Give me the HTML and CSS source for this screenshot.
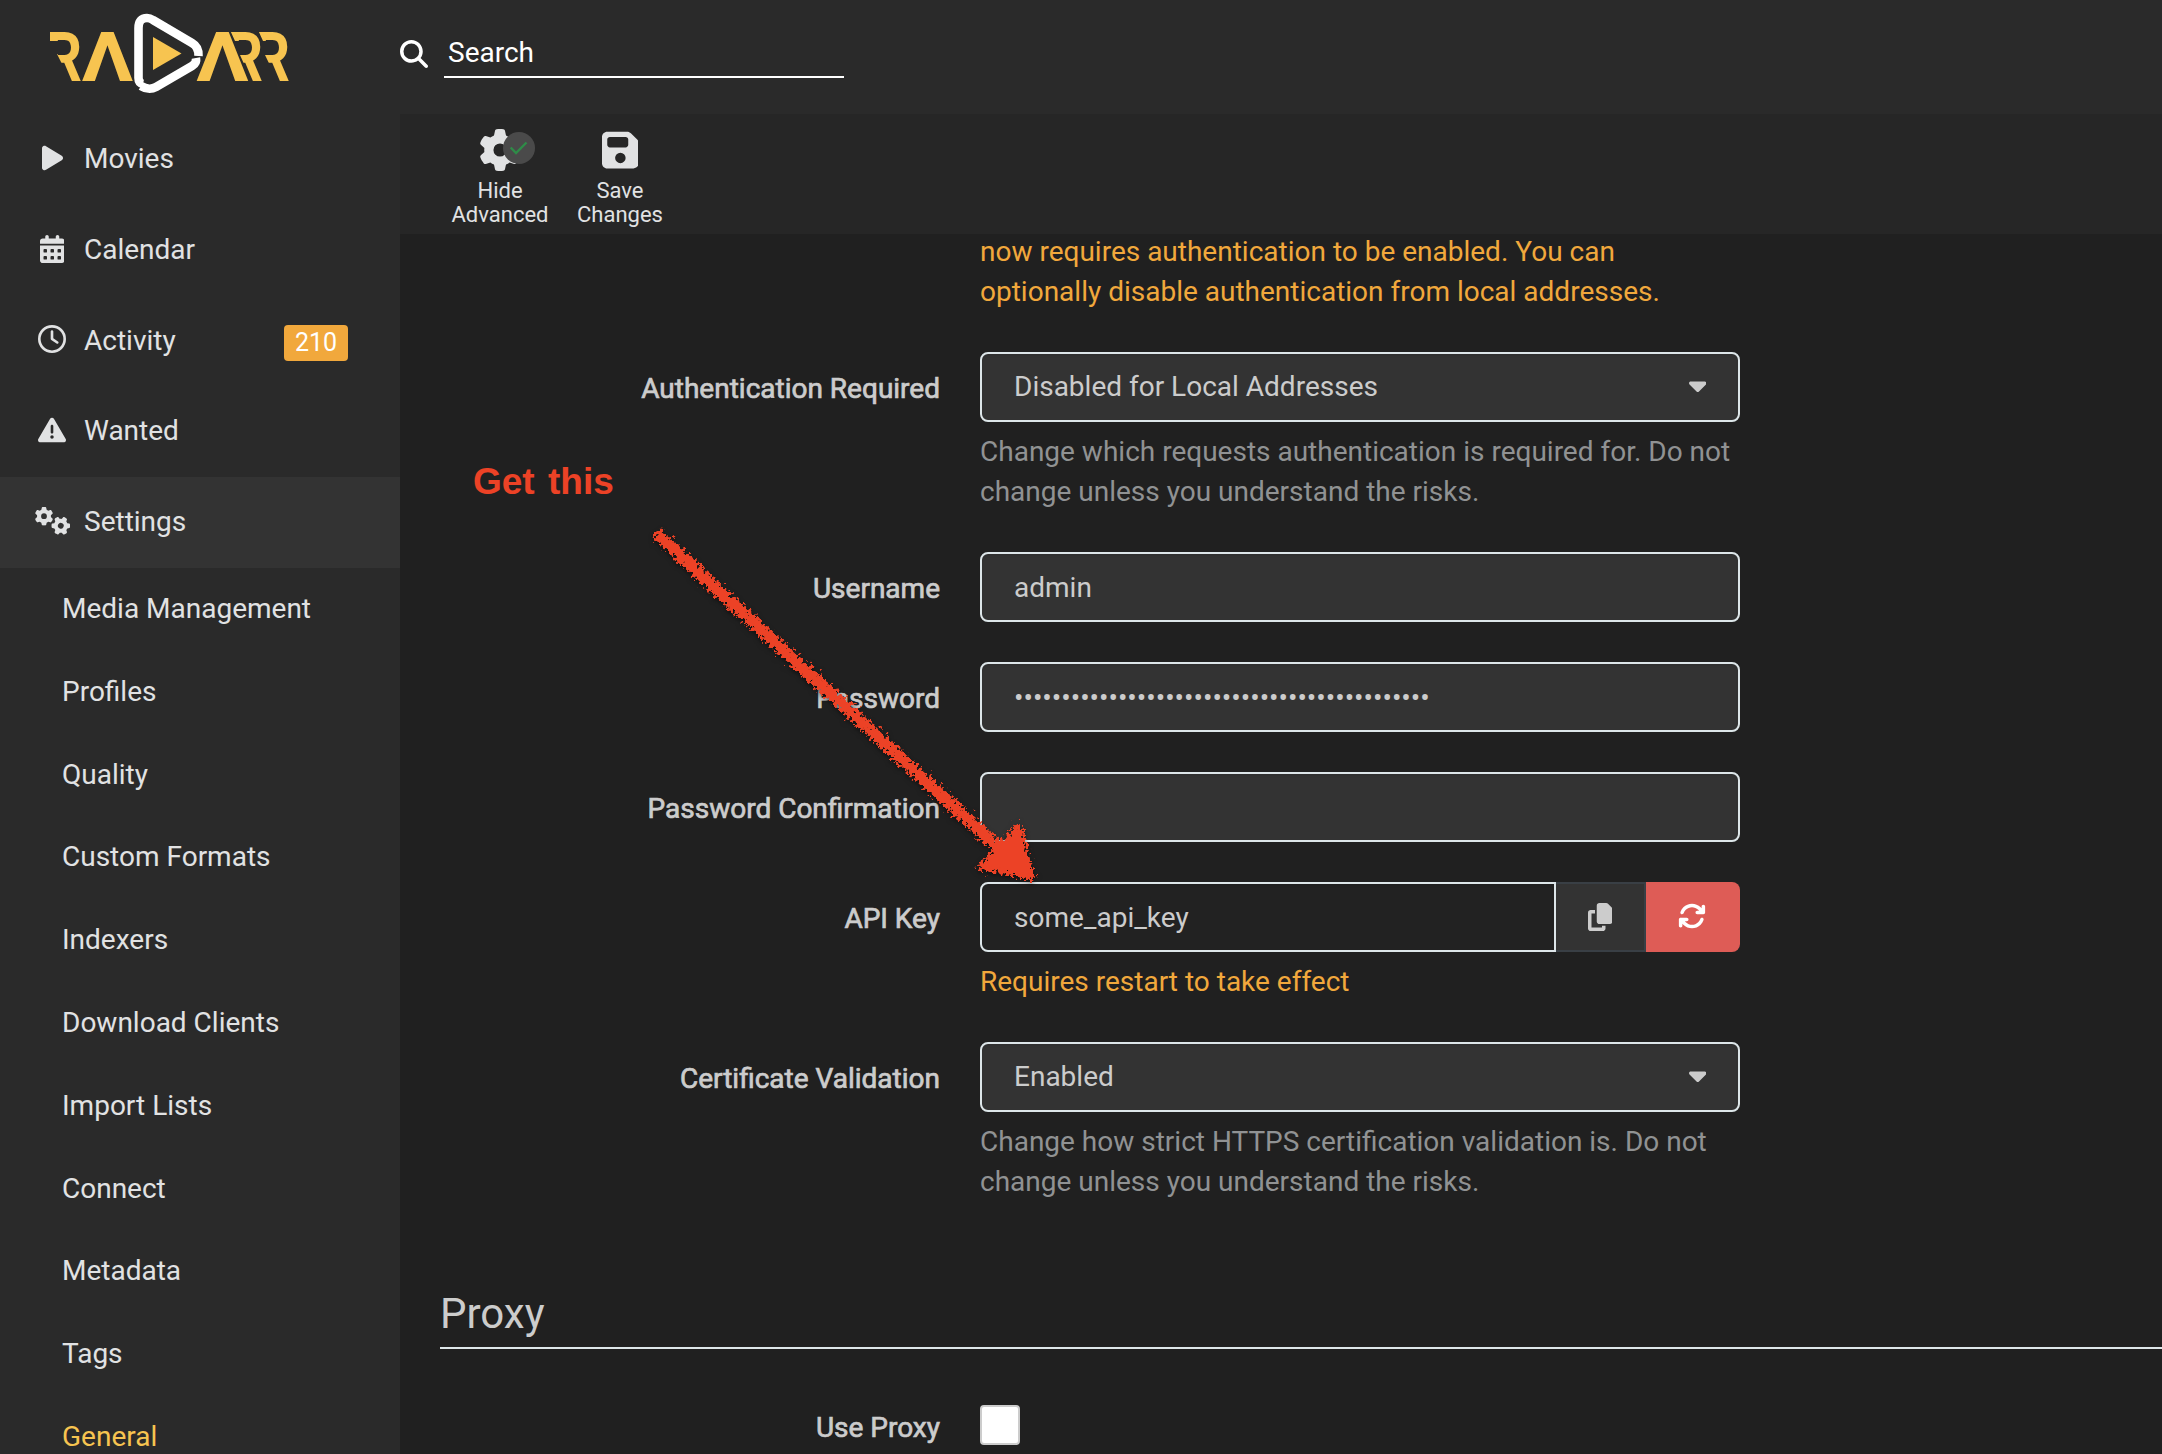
FILE: index.html
```html
<!DOCTYPE html>
<html lang="en">
<head>
<meta charset="utf-8">
<title>Radarr</title>
<link rel="stylesheet" href="styles.css">
</head>
<body>
<header class="header">
  <div class="logo">
    <svg class="logo-mark" width="250" height="100" viewBox="0 0 250 100" role="img" aria-label="Radarr">
      <defs>
        <clipPath id="cut-a"><path d="M10 30H46V82H31L17 54H20V41H10Z"/></clipPath>
        <clipPath id="cut-b"><path d="M190 30H226V82H212L200 55H203V41H195Z"/></clipPath>
        <clipPath id="cut-c"><path d="M218 30H254V82H238L225 55H229V41H223Z"/></clipPath>
      </defs>
      <g class="logo-word">
        <text x="6" y="81" textLength="36" lengthAdjust="spacingAndGlyphs" clip-path="url(#cut-a)">R</text>
        <text x="41.500" y="81" textLength="52" lengthAdjust="spacingAndGlyphs">Λ</text>
        <text x="156" y="81" textLength="53" lengthAdjust="spacingAndGlyphs">Λ</text>
        <text x="187" y="81" textLength="36" lengthAdjust="spacingAndGlyphs" clip-path="url(#cut-b)">R</text>
        <text x="214" y="81" textLength="36" lengthAdjust="spacingAndGlyphs" clip-path="url(#cut-c)">R</text>
      </g>
      <g fill="none" stroke="#fff" stroke-width="8.6">
        <path d="M103 84Q98.500 83 98.500 78V28Q98.500 18 107 18Q110 18 113 20L152 43Q159 47 158.500 56"/>
        <path d="M156 58Q157 63 152 66L116 87Q109 91 101 86"/>
      </g>
      <path class="logo-play" d="M113 37V70L141.500 53.500Z"/>
    </svg>
  </div>
  <div class="search">
    <svg class="icon" width="28" height="28" viewBox="0 0 512 512"><path d="M416 208c0 45.900-14.900 88.300-40 122.700L502.600 457.400c12.500 12.500 12.500 32.800 0 45.300s-32.800 12.500-45.300 0L330.700 376c-34.400 25.200-76.800 40-122.700 40C93.100 416 0 322.900 0 208S93.100 0 208 0S416 93.100 416 208zM208 352a144 144 0 1 0 0-288 144 144 0 1 0 0 288z"/></svg>
    <div class="search-input">Search</div>
  </div>
</header>

<div class="body">
  <nav class="sidebar">
    <a class="nav-item"><span class="nav-icon"><svg class="icon" width="21" height="28" viewBox="0 0 384 512"><path d="M73 39c-14.800-9.100-33.400-9.400-48.500-.9S0 62.600 0 80V432c0 17.400 9.400 33.400 24.500 41.900s33.700 8.100 48.500-.9L361 297c14.300-8.700 23-24.200 23-41s-8.700-32.200-23-41L73 39z"/></svg></span>Movies</a>
    <a class="nav-item"><span class="nav-icon"><svg class="icon" width="24.5" height="28" viewBox="0 0 448 512"><path fill-rule="evenodd" d="M128 0c17.700 0 32 14.300 32 32V64H288V32c0-17.700 14.300-32 32-32s32 14.300 32 32V64h48c26.500 0 48 21.500 48 48v48H0V112C0 85.500 21.500 64 48 64H96V32c0-17.700 14.300-32 32-32zM0 192H448V464c0 26.500-21.500 48-48 48H48c-26.500 0-48-21.500-48-48V192zM80 256a16 16 0 0 0-16 16v32a16 16 0 0 0 16 16h32a16 16 0 0 0 16-16v-32a16 16 0 0 0-16-16zM208 256a16 16 0 0 0-16 16v32a16 16 0 0 0 16 16h32a16 16 0 0 0 16-16v-32a16 16 0 0 0-16-16zM336 256a16 16 0 0 0-16 16v32a16 16 0 0 0 16 16h32a16 16 0 0 0 16-16v-32a16 16 0 0 0-16-16zM80 384a16 16 0 0 0-16 16v32a16 16 0 0 0 16 16h32a16 16 0 0 0 16-16v-32a16 16 0 0 0-16-16zM208 384a16 16 0 0 0-16 16v32a16 16 0 0 0 16 16h32a16 16 0 0 0 16-16v-32a16 16 0 0 0-16-16zM336 384a16 16 0 0 0-16 16v32a16 16 0 0 0 16 16h32a16 16 0 0 0 16-16v-32a16 16 0 0 0-16-16z"/></svg></span>Calendar</a>
    <a class="nav-item"><span class="nav-icon"><svg class="icon" width="28" height="28" viewBox="0 0 512 512"><path d="M464 256A208 208 0 1 1 48 256a208 208 0 1 1 416 0zM0 256a256 256 0 1 0 512 0A256 256 0 1 0 0 256zM232 120V256c0 8 4 15.500 10.700 20l96 64c11 7.400 25.900 4.400 33.300-6.700s4.400-25.900-6.700-33.300L280 243.200V120c0-13.300-10.700-24-24-24s-24 10.700-24 24z"/></svg></span>Activity<span class="badge">210</span></a>
    <a class="nav-item"><span class="nav-icon"><svg class="icon" width="28" height="28" viewBox="0 0 512 512"><path d="M256 32c14.200 0 27.300 7.500 34.500 19.800l216 368c7.300 12.400 7.300 27.700 .2 40.100S486.300 480 472 480H40c-14.300 0-27.600-7.700-34.700-20.100s-7-27.800 .2-40.100l216-368C228.700 39.500 241.800 32 256 32zm0 128c-13.300 0-24 10.700-24 24V296c0 13.300 10.700 24 24 24s24-10.700 24-24V184c0-13.300-10.700-24-24-24zm32 224a32 32 0 1 0 -64 0 32 32 0 1 0 64 0z"/></svg></span>Wanted</a>
    <a class="nav-item nav-item-active"><span class="nav-icon"><svg class="icon" width="35" height="28" viewBox="0 0 35 28"><defs><path id="gear" d="M495.900 166.600c3.200 8.700 .5 18.400-6.400 24.600l-43.300 39.400c1.100 8.300 1.700 16.800 1.700 25.400s-.6 17.100-1.700 25.400l43.300 39.400c6.900 6.200 9.600 15.900 6.400 24.600c-4.400 11.900-9.700 23.300-15.800 34.300l-4.700 8.100c-6.600 11-14 21.400-22.100 31.200c-5.900 7.200-15.700 9.600-24.500 6.800l-55.700-17.700c-13.400 10.300-28.200 18.900-44 25.400l-12.500 57.100c-2 9.100-9 16.300-18.200 17.800c-13.800 2.300-28 3.500-42.500 3.500s-28.700-1.200-42.500-3.500c-9.200-1.500-16.200-8.700-18.200-17.800l-12.500-57.100c-15.800-6.500-30.600-15.100-44-25.400L83.100 425.900c-8.800 2.800-18.600 .3-24.500-6.800c-8.100-9.800-15.500-20.200-22.100-31.200l-4.700-8.100c-6.100-11-11.400-22.400-15.800-34.300c-3.200-8.700-.5-18.400 6.400-24.600l43.300-39.400C64.600 273.100 64 264.600 64 256s.6-17.100 1.700-25.400L22.400 191.200c-6.900-6.200-9.600-15.900-6.400-24.600c4.400-11.900 9.700-23.300 15.800-34.300l4.700-8.100c6.600-11 14-21.400 22.100-31.200c5.900-7.200 15.700-9.600 24.500-6.800l55.700 17.700c13.400-10.300 28.200-18.900 44-25.400l12.500-57.100c2-9.100 9-16.300 18.200-17.800C227.300 1.200 241.500 0 256 0s28.700 1.200 42.500 3.500c9.200 1.500 16.200 8.700 18.200 17.800l12.500 57.100c15.800 6.500 30.600 15.100 44 25.400l55.700-17.700c8.800-2.800 18.600-.3 24.500 6.800c8.100 9.800 15.500 20.200 22.100 31.200l4.700 8.100c6.100 11 11.400 22.400 15.800 34.300zM256 336a80 80 0 1 0 0-160 80 80 0 1 0 0 160z"/></defs><use href="#gear" transform="translate(9 9.200) scale(.0362) translate(-256 -256)"/><use href="#gear" transform="translate(25.800 18.800) rotate(30) scale(.0362) translate(-256 -256)"/></svg></span>Settings</a>
    <a class="sub-item">Media Management</a>
    <a class="sub-item">Profiles</a>
    <a class="sub-item">Quality</a>
    <a class="sub-item">Custom Formats</a>
    <a class="sub-item">Indexers</a>
    <a class="sub-item">Download Clients</a>
    <a class="sub-item">Import Lists</a>
    <a class="sub-item">Connect</a>
    <a class="sub-item">Metadata</a>
    <a class="sub-item">Tags</a>
    <a class="sub-item sub-item-active">General</a>
  </nav>

  <main class="page">
    <div class="toolbar">
      <div class="tool">
        <span class="tool-icon">
          <svg class="icon" width="42" height="42" viewBox="0 0 512 512"><use href="#gear"/></svg>
          <svg class="tool-check" width="32" height="32" viewBox="0 0 32 32"><circle cx="16" cy="16" r="16" fill="#4a4a4a"/><path d="M7.700 15.500L13 21L23.500 10.500" fill="none" stroke="#2f8b48" stroke-width="2.400"/></svg>
        </span>
        <span>Hide<br>Advanced</span>
      </div>
      <div class="tool">
        <span class="tool-icon"><svg class="icon" width="36.75" height="42" viewBox="0 0 448 512"><path d="M64 32C28.700 32 0 60.700 0 96V416c0 35.300 28.700 64 64 64H384c35.300 0 64-28.700 64-64V173.300c0-17-6.700-33.300-18.700-45.300L352 50.700C340 38.700 323.700 32 306.700 32H64zm0 96c0-17.700 14.300-32 32-32H288c17.700 0 32 14.300 32 32v64c0 17.700-14.300 32-32 32H96c-17.700 0-32-14.300-32-32V128zM224 288a64 64 0 1 1 0 128 64 64 0 1 1 0-128z"/></svg></span>
        <span>Save<br>Changes</span>
      </div>
    </div>

    <div class="content">
      <div class="group">
        <div class="label"></div>
        <div class="control"><div class="help help-first warn">now requires authentication to be enabled. You can optionally disable authentication from local addresses.</div></div>
      </div>
      <div class="group">
        <div class="label">Authentication Required</div>
        <div class="control">
          <div class="input select">Disabled for Local Addresses<svg class="icon" width="17.5" height="28" viewBox="0 0 320 512"><path id="caret" d="M137.400 374.600c12.500 12.500 32.800 12.500 45.300 0l128-128c9.200-9.200 11.900-22.900 6.900-34.900s-16.600-19.800-29.600-19.800L32 192c-12.900 0-24.600 7.800-29.600 19.800s-2.200 25.700 6.900 34.900l128 128z"/></svg></div>
          <div class="help">Change which requests authentication is required for. Do not change unless you understand the risks.</div>
        </div>
      </div>
      <div class="group">
        <div class="label">Username</div>
        <div class="control"><div class="input">admin</div></div>
      </div>
      <div class="group">
        <div class="label">Password</div>
        <div class="control"><div class="input">••••••••••••••••••••••••••••••••••••••••••••</div></div>
      </div>
      <div class="group">
        <div class="label">Password Confirmation</div>
        <div class="control"><div class="input"></div></div>
      </div>
      <div class="group">
        <div class="label">API Key</div>
        <div class="control">
          <div class="input-row">
            <div class="input input-key">some_api_key</div>
            <div class="btn btn-copy"><svg class="icon" width="24.5" height="28" viewBox="0 0 448 512"><path d="M208 0H332.100c12.700 0 24.900 5.100 33.900 14.100l67.900 67.900c9 9 14.100 21.200 14.100 33.900V336c0 26.500-21.500 48-48 48H208c-26.500 0-48-21.500-48-48V48c0-26.500 21.500-48 48-48zM48 128h80v64H64V448H256V416h64v48c0 26.500-21.500 48-48 48H48c-26.500 0-48-21.500-48-48V176c0-26.500 21.500-48 48-48z"/></svg></div>
            <div class="btn btn-reset"><svg class="icon" width="28" height="28" viewBox="0 0 512 512"><path d="M105.100 202.600c7.700-21.800 20.200-42.300 37.800-59.800c62.500-62.500 163.800-62.500 226.300 0L386.300 160H352c-17.700 0-32 14.300-32 32s14.300 32 32 32H463.900c17.700 0 32-14.300 32-32V80c0-17.700-14.300-32-32-32s-32 14.300-32 32v35.200L414.400 97.600c-87.500-87.500-229.300-87.500-316.800 0C73.200 122 55.600 150.700 44.800 181.400c-5.900 16.700 2.900 34.900 19.500 40.800s34.900-2.900 40.800-19.500zM39 289.300c-5 1.500-9.800 4.200-13.700 8.200c-4 4-6.700 8.800-8.100 14c-.3 1.200-.6 2.500-.8 3.800c-.3 1.700-.4 3.400-.4 5.100V432c0 17.700 14.300 32 32 32s32-14.300 32-32V396.900l17.600 17.500c87.500 87.400 229.300 87.400 316.700 0c24.400-24.400 42.100-53.100 52.900-83.700c5.900-16.700-2.900-34.900-19.500-40.800s-34.900 2.900-40.800 19.500c-7.700 21.800-20.200 42.300-37.800 59.800c-62.500 62.500-163.800 62.500-226.300 0l-.1-.1L125.600 352H160c17.700 0 32-14.300 32-32s-14.300-32-32-32H48.400c-1.600 0-3.200 .1-4.800 .3s-3.100 .5-4.600 1z"/></svg></div>
          </div>
          <div class="help warn">Requires restart to take effect</div>
        </div>
      </div>
      <div class="group">
        <div class="label">Certificate Validation</div>
        <div class="control">
          <div class="input select">Enabled<svg class="icon" width="17.5" height="28" viewBox="0 0 320 512"><use href="#caret"/></svg></div>
          <div class="help">Change how strict HTTPS certification validation is. Do not change unless you understand the risks.</div>
        </div>
      </div>
      <h2 class="legend">Proxy</h2>
      <div class="group">
        <div class="label">Use Proxy</div>
        <div class="control"><div class="checkbox"></div></div>
      </div>
    </div>
  </main>
</div>

<div class="note">Get this</div>
<svg class="arrow" width="420" height="380" viewBox="0 0 420 380">
  <defs>
    <filter id="chalk" x="-5%" y="-5%" width="110%" height="110%" color-interpolation-filters="sRGB">
      <feTurbulence type="fractalNoise" baseFrequency=".3" numOctaves="3" seed="4" result="n"/>
      <feDisplacementMap in="SourceGraphic" in2="n" scale="15" xChannelSelector="R" yChannelSelector="G" result="d"/>
      <feDropShadow in="d" dx="0" dy="2" stdDeviation="2" flood-color="#000" flood-opacity=".5"/>
    </filter>
  </defs>
  <g filter="url(#chalk)">
    <path class="arrow-line" d="M16 21L374 350"/>
    <path class="arrow-head" d="M379 313L339 356L393 366Z"/>
  </g>
</svg>
</body>
</html>
```
FILE: styles.css
```css
* { box-sizing: border-box; }

body {
  margin: 0;
  width: 2162px;
  height: 1454px;
  overflow: hidden;
  position: relative;
  display: flex;
  flex-direction: column;
  background: #202020;
  color: #ccc;
  font: 28px/42.8px Roboto, "Liberation Sans", sans-serif;
}

.icon { display: block; flex: none; fill: currentColor; }

.header { display: flex; flex: none; height: 114px; background: #2a2a2a; color: #fff; }
.logo { width: 400px; padding-left: 40px; }
.logo-mark { display: block; overflow: visible; }
.logo-word { fill: #f7c450; font: 700 69px Roboto, sans-serif; }
.logo-play { fill: #f7c450; }
.search { display: flex; align-items: flex-start; gap: 16px; padding-top: 26px; }
.search .icon { margin-top: 14px; }
.search-input { width: 400px; height: 52px; padding: 6px 4px 0; border-bottom: 2px solid #fff; }

.body { display: flex; flex: 1; min-height: 0; }
.sidebar { flex: none; width: 400px; overflow: hidden; background: #2a2a2a; color: #e1e2e3; }
.nav-item { display: flex; align-items: center; height: 90.8px; padding: 0 52px 0 34px; }
.nav-icon { display: flex; justify-content: center; width: 36px; margin: 0 14px 3px 0; }
.nav-item-active { background: #333; }
.badge { margin-left: auto; margin-top: 4px; width: 64px; height: 36px; border-radius: 4px; background: #f1a83c; color: #fff; font-size: 25px; line-height: 36px; text-align: center; }
.sub-item { display: block; padding: 20px 62px; height: 82.8px; }
.sub-item-active { color: #f7c450; }

.page { display: flex; flex: 1; flex-direction: column; min-width: 0; }
.toolbar { display: flex; flex: none; height: 120px; padding: 15px 40px 0; background: #262626; color: #e1e2e3; }
.tool { display: flex; flex-direction: column; align-items: center; width: 120px; gap: 8px; font-size: 22px; line-height: 24px; text-align: center; }
.tool-icon { position: relative; }
.tool-check { position: absolute; left: 24px; top: 3px; }

.content { flex: 1; min-height: 0; overflow: hidden; padding-left: 40px; }
.group { display: flex; gap: 40px; margin-bottom: 40px; }
.label { width: 500px; line-height: 74px; height: 70px; text-align: right; -webkit-text-stroke: .7px currentColor; }
.control { width: 760px; }
.input { height: 70px; padding: 0 32px; border: 2px solid #dde6e9; border-radius: 8px; background: #333; line-height: 67px; box-shadow: inset 0 2px 2px rgba(0, 0, 0, .08); }
.select { display: flex; justify-content: space-between; align-items: center; line-height: 64px; }
.select .icon { margin-top: -4px; }
.help { margin-top: 10px; color: #909293; line-height: 40px; }
.help-first { margin-top: -2px; height: 80px; }
.warn { color: #f1a83c; }
.group:first-child .label { height: 0; }

.input-row { display: flex; }
.input-key { width: 576px; border-radius: 8px 0 0 8px; background: #222; }
.btn { display: flex; align-items: center; justify-content: center; height: 70px; padding-bottom: 2px; }
.btn-copy { width: 90px; border: 2px solid #393f45; border-left: 0; background: #333; padding-bottom: 0; }
.btn-reset { width: 94px; padding-right: 2px; border-radius: 0 8px 8px 0; background: #de5c56; color: #fff; }

.legend { height: 107px; margin: 0 0 42px; padding-top: 39px; border-bottom: 2px solid #dde6e9; font-size: 42px; font-weight: 400; line-height: 66px; }
.checkbox { width: 40px; height: 40px; margin-top: 14px; border: 2px solid #ccc; border-radius: 4px; background: #fff; }

.note { position: absolute; left: 473px; top: 461px; color: #ec4226; font: 700 37px/42px "Liberation Sans", sans-serif; word-spacing: 3px; white-space: nowrap; }
.arrow { position: absolute; left: 640px; top: 512px; }
.arrow-line { fill: none; stroke: #ec4226; stroke-width: 12; }
.arrow-head { fill: #ec4226; stroke: #ec4226; stroke-width: 4; stroke-linejoin: round; }
```
